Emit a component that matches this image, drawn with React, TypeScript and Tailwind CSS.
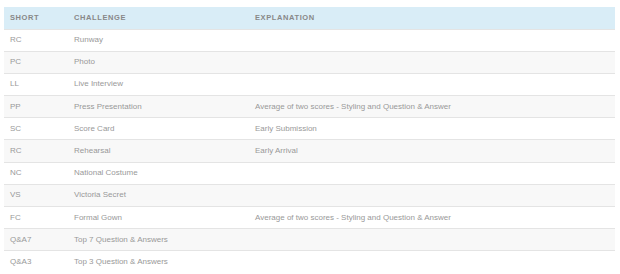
import React from "react";

const rows: [string, string, string][] = [
  ["RC", "Runway", ""],
  ["PC", "Photo", ""],
  ["LL", "Live Interview", ""],
  ["PP", "Press Presentation", "Average of two scores - Styling and Question & Answer"],
  ["SC", "Score Card", "Early Submission"],
  ["RC", "Rehearsal", "Early Arrival"],
  ["NC", "National Costume", ""],
  ["VS", "Victoria Secret", ""],
  ["FC", "Formal Gown", "Average of two scores - Styling and Question & Answer"],
  ["Q&A7", "Top 7 Question & Answers", ""],
  ["Q&A3", "Top 3 Question & Answers", ""],
];

export default function App() {
  return (
    <div className="w-[620px] h-[274px] bg-white pt-[7px] pl-[4px] font-['Liberation_Sans',Arial,sans-serif]">
      <table className="w-[611px] border-collapse text-left">
        <thead>
          <tr className="h-[22px] bg-[#d9edf7] text-[7.5px] font-bold tracking-[0.6px] text-[#888]">
            <th className="w-[64px] pl-[6px] font-bold">SHORT</th>
            <th className="w-[181px] pl-[6px] font-bold">CHALLENGE</th>
            <th className="pl-[6px] font-bold">EXPLANATION</th>
          </tr>
        </thead>
        <tbody className="text-[8px] text-[#999]">
          {rows.map(([s, c, e], i) => (
            <tr
              key={i}
              className={`h-[22.2px] border-t border-[#e4e4e4] ${i % 2 === 1 ? "bg-[#f8f8f8]" : "bg-white"}`}
            >
              <td className="pl-[6px]">{s}</td>
              <td className="pl-[6px]">{c}</td>
              <td className="pl-[6px]">{e}</td>
            </tr>
          ))}
        </tbody>
      </table>
    </div>
  );
}
